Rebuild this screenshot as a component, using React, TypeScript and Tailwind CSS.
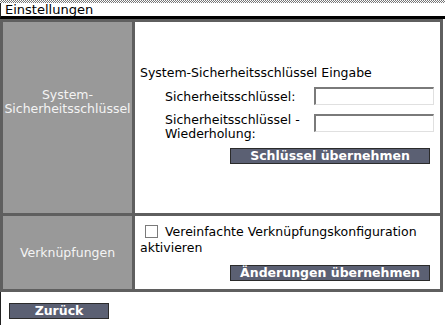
export default function App() {
  return (
    <div className="w-[445px] h-[325px] bg-white overflow-hidden font-['DejaVu_Sans',sans-serif] text-[12.5px] leading-[14px] text-black">
      {/* dithered strip */}
      <div className="h-[3px] bg-[repeating-conic-gradient(#777_0_25%,#fff_0_50%)] bg-[length:2px_2px]" />
      {/* header */}
      <div className="h-[16px] border-l border-l-[#222] border-b-[3px] border-b-black pl-[4px] text-[13px] leading-[14px]">
        Einstellungen
      </div>

      {/* settings table */}
      <div className="w-[443px] border-[3px] border-[#5f5f5f]">
        {/* row 1 */}
        <div className="flex h-[194px] border-b-[3px] border-[#5f5f5f]">
          <div className="w-[129px] shrink-0 bg-[#999999] text-[#f4f4f4] text-center pt-[66px]">
            System-
            <br />
            Sicherheitsschlüssel
          </div>
          <div className="w-[3px] bg-[#5f5f5f]" />
          <div className="flex-1 pl-[5px] pt-[44px]">
            <div>System-Sicherheitsschlüssel Eingabe</div>
            <div className="flex mt-[7px] pl-[25px]">
              <div className="w-[149px] pt-[3px]">Sicherheitsschlüssel:</div>
              <TextBox />
            </div>
            <div className="flex mt-[8px] pl-[25px]">
              <div className="w-[149px]">
                Sicherheitsschlüssel -
                <br />
                Wiederholung:
              </div>
              <div className="pt-[1px]">
                <TextBox />
              </div>
            </div>
            <div className="mt-[7px] pl-[90px]">
              <Button label="Schlüssel übernehmen" wide />
            </div>
          </div>
        </div>

        {/* row 2 */}
        <div className="flex h-[73px]">
          <div className="w-[129px] shrink-0 bg-[#999999] text-[#f4f4f4] flex items-center justify-center">
            Verknüpfungen
          </div>
          <div className="w-[3px] bg-[#5f5f5f]" />
          <div className="flex-1 pl-[5px] pt-[8px]">
            <div className="leading-[16px]">
              <span className="inline-block align-[-2px] w-[13px] h-[13px] border border-[#7a7a7a] bg-white ml-[5px] mr-[7px]" />
              Vereinfachte Verknüpfungskonfiguration aktivieren
            </div>
            <div className="mt-[9px] pl-[90px]">
              <Button label="Änderungen übernehmen" wide />
            </div>
          </div>
        </div>
      </div>

      {/* footer */}
      <div className="h-[33px] border-l border-l-[#222] pl-[8px] pt-[11px]">
        <Button label="Zurück" />
      </div>
    </div>
  );
}

function TextBox() {
  return (
    <div className="w-[120px] h-[18px] bg-white border-t-2 border-l-2 border-t-[#7a7a7a] border-l-[#7a7a7a] border-b border-r border-b-[#e0e0e0] border-r-[#e0e0e0]" />
  );
}

function Button({ label, wide }: { label: string; wide?: boolean }) {
  return (
    <div
      className={
        (wide ? "w-[200px]" : "w-[100px]") +
        " h-[16px] bg-[#5b6073] border border-[#2b2b2b] text-white font-bold text-center text-[12.5px] leading-[14px]"
      }
    >
      {label}
    </div>
  );
}
